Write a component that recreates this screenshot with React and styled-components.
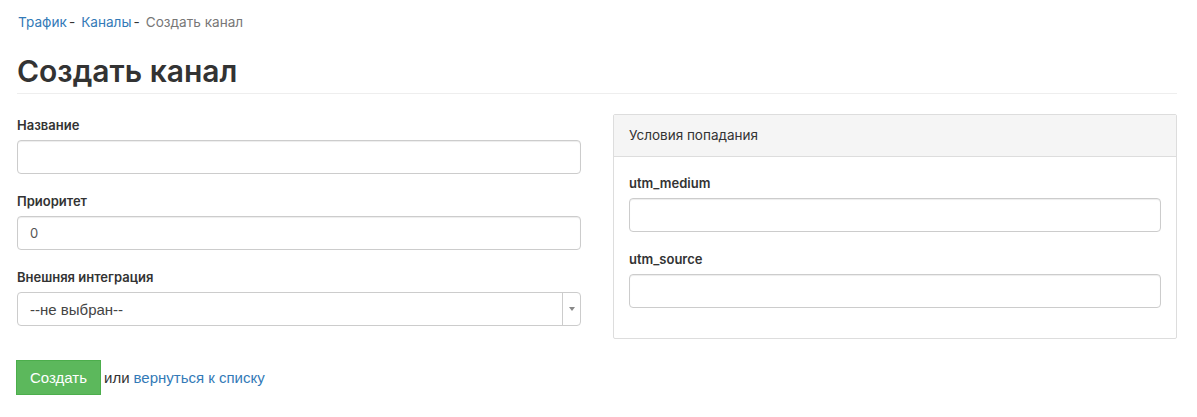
import styled, { createGlobalStyle } from 'styled-components'

const GlobalStyle = createGlobalStyle`
  body {
    margin: 0;
    background: #fff;
    font-family: Inter, "Noto Sans", sans-serif;
    color: #333;
  }
`

const Page = styled.div`
  padding: 13px 20px 0 17px;
`

const Breadcrumbs = styled.div`
  font-size: 13.6px;
  line-height: 18px;
  color: #777;
  padding-left: 1px;
`

const Crumb = styled.a`
  color: #337ab7;
  text-decoration: none;
`

const Sep = styled.span`
  color: #333;
  margin: 0 6px 0 2px;
`

const Title = styled.h1`
  margin: 22px 0 0;
  padding-bottom: 4px;
  font-size: 30px;
  line-height: 36px;
  font-weight: 600;
  color: #333;
  border-bottom: 1px solid #eee;
`

const Columns = styled.div`
  display: grid;
  grid-template-columns: 1fr 1fr;
  gap: 32px;
  margin-top: 20px;
`

const MainColumn = styled.div`
  padding-top: 2px;
`

const Field = styled.div`
  margin-bottom: 18px;
`

const Label = styled.label`
  display: block;
  font-size: 13px;
  font-weight: 600;
  line-height: 18px;
  margin-bottom: 6px;
`

const Input = styled.input`
  display: block;
  box-sizing: border-box;
  width: 100%;
  height: 34px;
  padding: 6px 12px;
  font-family: Inter, sans-serif;
  font-size: 13px;
  color: #555;
  border: 1px solid #ccc;
  border-radius: 4px;
  box-shadow: inset 0 1px 1px rgba(0, 0, 0, 0.075);
  outline: none;
`

const Select = styled.div`
  display: flex;
  box-sizing: border-box;
  height: 34px;
  border: 1px solid #ccc;
  border-radius: 4px;
  font-family: "Liberation Sans", Arial, sans-serif;
  font-size: 15px;
  color: #444;
`

const SelectValue = styled.div`
  flex: 1;
  display: flex;
  align-items: center;
  padding-left: 12px;
`

const SelectArrow = styled.div`
  width: 17px;
  border-left: 1px solid #ccc;
  display: flex;
  align-items: center;
  justify-content: center;
  &::after {
    content: '';
    border-left: 3px solid transparent;
    border-right: 3px solid transparent;
    border-top: 4px solid #888;
  }
`

const Panel = styled.div`
  border: 1px solid #ddd;
  border-radius: 2px;
  align-self: start;
`

const PanelHeading = styled.div`
  background: #f5f5f5;
  border-bottom: 1px solid #ddd;
  padding: 12px 15px;
  font-size: 13.5px;
  line-height: 17px;
  color: #333;
`

const PanelBody = styled.div`
  padding: 17px 15px 12px;
`

const Actions = styled.div`
  display: flex;
  align-items: center;
  margin-top: 34px;
  font-family: "Liberation Sans", Arial, sans-serif;
  font-size: 15px;
  color: #333;
`

const Button = styled.button`
  background: #5cb85c;
  border: 1px solid #4cae4c;
  color: #fff;
  font-family: "Liberation Sans", Arial, sans-serif;
  font-size: 15px;
  height: 35px;
  width: 85px;
  padding: 0;
  margin-right: 3px;
  margin-left: -1px;
`

const BackLink = styled.a`
  color: #337ab7;
  text-decoration: none;
  margin-left: 4px;
`

export default function App() {
  return (
    <>
      <GlobalStyle />
      <Page>
        <Breadcrumbs>
          <Crumb href="#">Трафик</Crumb>
          <Sep>-</Sep>
          <Crumb href="#">Каналы</Crumb>
          <Sep>-</Sep>
          Создать канал
        </Breadcrumbs>
        <Title>Создать канал</Title>
        <Columns>
          <MainColumn>
            <Field>
              <Label>Название</Label>
              <Input />
            </Field>
            <Field>
              <Label>Приоритет</Label>
              <Input defaultValue="0" />
            </Field>
            <Field>
              <Label>Внешняя интеграция</Label>
              <Select>
                <SelectValue>--не выбран--</SelectValue>
                <SelectArrow />
              </Select>
            </Field>
            <Actions>
              <Button>Создать</Button>
              или
              <BackLink href="#">вернуться к списку</BackLink>
            </Actions>
          </MainColumn>
          <Panel>
            <PanelHeading>Условия попадания</PanelHeading>
            <PanelBody>
              <Field>
                <Label>utm_medium</Label>
                <Input />
              </Field>
              <Field>
                <Label>utm_source</Label>
                <Input />
              </Field>
            </PanelBody>
          </Panel>
        </Columns>
      </Page>
    </>
  )
}
